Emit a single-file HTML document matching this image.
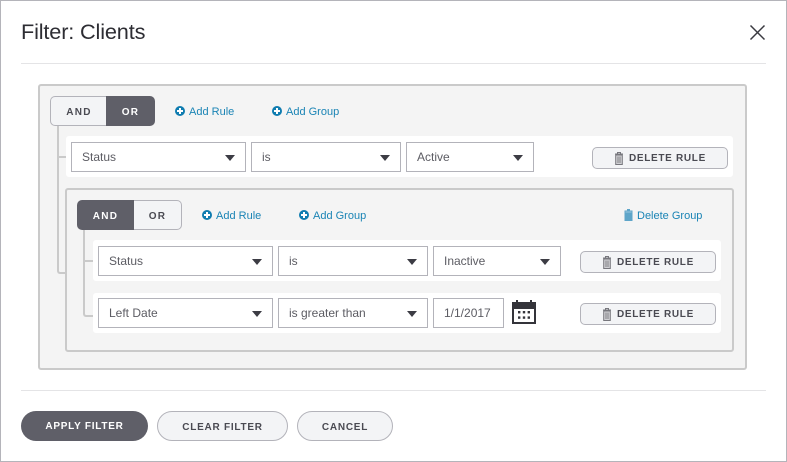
<!DOCTYPE html>
<html><head><meta charset="utf-8">
<style>
html,body{margin:0;padding:0;background:#fff}
#p{position:relative;width:787px;height:462px;overflow:hidden;background:#fff;font-family:"Liberation Sans",sans-serif;color:#55555c}
#p div,#p svg{position:absolute;box-sizing:border-box}
.frame{left:0;top:0;width:787px;height:462px;border:1px solid #b4b4ba}
.hr{left:21px;width:745px;height:1px;background:#e4e4e6}
.title{left:21px;top:19px;font-size:21.7px;line-height:26px;color:#2d2d33;white-space:nowrap;letter-spacing:-.15px}
.g{border:2px solid #cacaca;border-radius:3px;background:#f4f4f4}
.row{background:#fff;border-radius:3px}
.sel{height:30px;background:#fff;border:1px solid #b3b3ba;font-size:12px;line-height:28px;padding-left:10px;color:#5c5c63;white-space:nowrap}
.sel i{position:absolute;right:10px;top:12px;width:0;height:0;border-left:5.5px solid transparent;border-right:5.5px solid transparent;border-top:6px solid #3c3c44}
.seg{height:30px;font-weight:bold;font-size:10px;line-height:33px;letter-spacing:1.3px;text-align:center}
.on{background:#5f5f68;color:#fff}
.off{background:#f3f4f6;border:1px solid #b3b3ba;color:#4a4a52;line-height:31px}
.lnk{font-size:11px;line-height:14px;color:#1a84b5;white-space:nowrap}
.line{background:#cacaca}
.del{width:136px;height:22px;background:#f3f4f6;border:1px solid #b3b3ba;border-radius:5px;font-weight:bold;font-size:10px;line-height:22px;letter-spacing:.68px;color:#4a4a52;padding-left:36px;white-space:nowrap}
.del svg{left:21px;top:4px}
.pill{top:411px;height:30px;border-radius:15px;font-weight:bold;font-size:10px;line-height:31px;letter-spacing:.75px;text-align:center;white-space:nowrap}
</style></head>
<body><div id="p">
<div class="frame"></div>
<div class="title">Filter: Clients</div>
<svg style="left:749px;top:24px" width="17" height="17" viewBox="0 0 17 17"><path d="M1.5 1.5L15.5 15.5M15.5 1.5L1.5 15.5" stroke="#3a3a40" stroke-width="1.5" fill="none"/></svg>
<div class="hr" style="top:63px"></div>
<div class="hr" style="top:390px"></div>

<div class="g" style="left:38px;top:84px;width:709px;height:286px"></div>

<div class="line" style="left:57px;top:126px;width:2px;height:142px"></div>
<div class="line" style="left:57px;top:156px;width:10px;height:2px"></div>
<div style="left:57px;top:266px;width:10px;height:8px;border-left:2px solid #cacaca;border-bottom:2px solid #cacaca;border-bottom-left-radius:3px"></div>

<div class="seg off" style="left:50px;top:96px;width:57px;border-radius:5px 0 0 5px;border-right:0">AND</div>
<div class="seg on" style="left:106px;top:96px;width:49px;border-radius:0 5px 5px 0">OR</div>
<svg style="left:175px;top:106px" width="10" height="10" viewBox="0 0 10 10"><circle cx="5" cy="5" r="5" fill="#0f7cb0"/><path d="M5 2V8M2 5H8" stroke="#fff" stroke-width="2"/></svg>
<div class="lnk" style="left:189px;top:105px">Add Rule</div>
<svg style="left:272px;top:106px" width="10" height="10" viewBox="0 0 10 10"><circle cx="5" cy="5" r="5" fill="#0f7cb0"/><path d="M5 2V8M2 5H8" stroke="#fff" stroke-width="2"/></svg>
<div class="lnk" style="left:286px;top:105px">Add Group</div>

<div class="row" style="left:66px;top:136px;width:667px;height:41px"></div>
<div class="sel" style="left:71px;top:142px;width:175px">Status<i></i></div>
<div class="sel" style="left:251px;top:142px;width:150px">is<i></i></div>
<div class="sel" style="left:406px;top:142px;width:128px">Active<i></i></div>
<div class="del" style="left:592px;top:147px">
<svg width="10" height="13" viewBox="0 0 10 13"><path d="M3.5 1.5V.5H6.5V1.5M1 2H9" stroke="#77777d" stroke-width="1" fill="none"/><path d="M1.7 3H8.3V12.5H1.7Z" fill="#d0d0d4" stroke="#77777d" stroke-width="1"/><path d="M4 4.5V11M6 4.5V11" stroke="#77777d" stroke-width=".9"/></svg>DELETE RULE</div>

<div class="g" style="left:65px;top:188px;width:669px;height:164px"></div>
<div class="line" style="left:83px;top:230px;width:2px;height:80px"></div>
<div class="line" style="left:83px;top:260px;width:10px;height:2px"></div>
<div style="left:83px;top:308px;width:10px;height:9px;border-left:2px solid #cacaca;border-bottom:2px solid #cacaca;border-bottom-left-radius:3px"></div>

<div class="seg on" style="left:77px;top:200px;width:57px;border-radius:5px 0 0 5px">AND</div>
<div class="seg off" style="left:134px;top:200px;width:48px;border-radius:0 5px 5px 0;border-left:0">OR</div>
<svg style="left:202px;top:210px" width="10" height="10" viewBox="0 0 10 10"><circle cx="5" cy="5" r="5" fill="#0f7cb0"/><path d="M5 2V8M2 5H8" stroke="#fff" stroke-width="2"/></svg>
<div class="lnk" style="left:216px;top:209px">Add Rule</div>
<svg style="left:299px;top:210px" width="10" height="10" viewBox="0 0 10 10"><circle cx="5" cy="5" r="5" fill="#0f7cb0"/><path d="M5 2V8M2 5H8" stroke="#fff" stroke-width="2"/></svg>
<div class="lnk" style="left:313px;top:209px">Add Group</div>
<svg style="left:624px;top:209px" width="9" height="12" viewBox="0 0 9 12"><path d="M3 0H6V1.5H8.5V12H.5V1.5H3Z" fill="#5ea5c9"/><path d="M1.5 3H7.5" stroke="#9cc8de" stroke-width="1"/></svg>
<div class="lnk" style="left:637px;top:209px">Delete Group</div>

<div class="row" style="left:93px;top:240px;width:628px;height:41px"></div>
<div class="sel" style="left:98px;top:246px;width:175px">Status<i></i></div>
<div class="sel" style="left:278px;top:246px;width:150px">is<i></i></div>
<div class="sel" style="left:433px;top:246px;width:128px">Inactive<i></i></div>
<div class="del" style="left:580px;top:251px">
<svg width="10" height="13" viewBox="0 0 10 13"><path d="M3.5 1.5V.5H6.5V1.5M1 2H9" stroke="#77777d" stroke-width="1" fill="none"/><path d="M1.7 3H8.3V12.5H1.7Z" fill="#d0d0d4" stroke="#77777d" stroke-width="1"/><path d="M4 4.5V11M6 4.5V11" stroke="#77777d" stroke-width=".9"/></svg>DELETE RULE</div>

<div class="row" style="left:93px;top:293px;width:628px;height:40px"></div>
<div class="sel" style="left:98px;top:298px;width:175px">Left Date<i></i></div>
<div class="sel" style="left:278px;top:298px;width:150px">is greater than<i></i></div>
<div class="sel" style="left:433px;top:298px;width:71px">1/1/2017</div>
<svg style="left:512px;top:300px" width="24" height="24" viewBox="0 0 24 24"><path d="M0 2H4V0H6V2H18V0H20V2H24V24H0Z" fill="#34343a"/><rect x="2" y="9" width="20" height="13" fill="#fff"/><g fill="#34343a"><rect x="6" y="11" width="2.4" height="2.4"/><rect x="10.8" y="11" width="2.4" height="2.4"/><rect x="15.6" y="11" width="2.4" height="2.4"/><rect x="6" y="16.4" width="2.4" height="2.4"/><rect x="10.8" y="16.4" width="2.4" height="2.4"/><rect x="15.6" y="16.4" width="2.4" height="2.4"/></g></svg>
<div class="del" style="left:580px;top:303px">
<svg width="10" height="13" viewBox="0 0 10 13"><path d="M3.5 1.5V.5H6.5V1.5M1 2H9" stroke="#77777d" stroke-width="1" fill="none"/><path d="M1.7 3H8.3V12.5H1.7Z" fill="#d0d0d4" stroke="#77777d" stroke-width="1"/><path d="M4 4.5V11M6 4.5V11" stroke="#77777d" stroke-width=".9"/></svg>DELETE RULE</div>

<div class="pill on" style="left:21px;width:127px">APPLY FILTER</div>
<div class="pill off" style="left:157px;width:131px">CLEAR FILTER</div>
<div class="pill off" style="left:297px;width:96px">CANCEL</div>
</div></body></html>
